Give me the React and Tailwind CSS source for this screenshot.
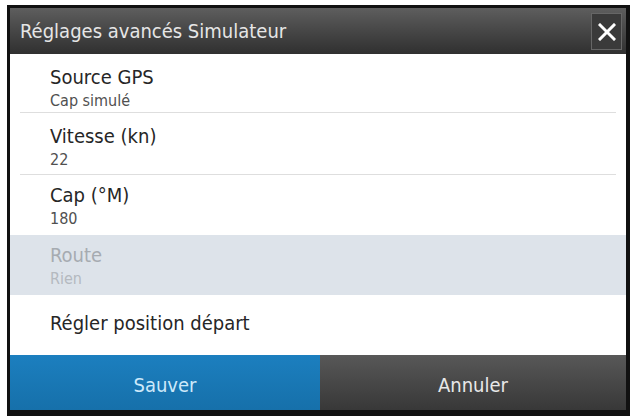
import React from 'react';

const font = { fontFamily: '"DejaVu Sans Condensed", "Liberation Sans", Arial, sans-serif' };

function Row({ title, value, disabled, className }) {
    return (
        <div className={className}>
            <div className={"text-[20px] leading-[22px] " + (disabled ? "text-[#a6abb1]" : "text-[#262626]")}>{title}</div>
            {value && (
                <div className={"mt-[3px] text-[16px] leading-[19px] " + (disabled ? "text-[#b4b9bf]" : "text-[#505050]")}>{value}</div>
            )}
        </div>
    );
}

export default function App() {
    return (
        <div className="w-[635px] h-[417px] bg-white overflow-hidden" style={font}>
            <div className="ml-[7px] mt-[5px] w-[623px] h-[411px] bg-[#111111] pt-[3px] pl-[3px] pr-[4px] pb-[6px] flex flex-col">
                {/* header */}
                <div className="h-[46px] flex items-center justify-between bg-gradient-to-b from-[#5e5e5e] to-[#303030] pl-[10px] pr-[4px]">
                    <span className="text-[20px] text-[#e6e6e6] leading-none">Réglages avancés Simulateur</span>
                    <div className="w-[31px] h-[37px] bg-[#3a3a3a] border border-[#666666] flex items-center justify-center mt-[1px]">
                        <svg width="18" height="18" viewBox="0 0 18 18">
                            <path d="M2 2 L16 16 M16 2 L2 16" stroke="#ffffff" strokeWidth="3" strokeLinecap="square" />
                        </svg>
                    </div>
                </div>

                {/* list */}
                <div className="bg-white flex flex-col">
                    <div className="mx-[10px] border-b border-[#dedede]">
                        <Row className="h-[58px] pt-[12px] pl-[30px]" title="Source GPS" value="Cap simulé" />
                    </div>
                    <div className="mx-[10px] border-b border-[#dedede]">
                        <Row className="h-[61px] pt-[12px] pl-[30px]" title="Vitesse (kn)" value="22" />
                    </div>
                    <Row className="h-[60px] pt-[9px] pl-[40px]" title="Cap (°M)" value="180" />
                    <Row className="h-[60px] pt-[9px] pl-[40px] bg-[#dde3ea]" title="Route" value="Rien" disabled />
                    <Row className="h-[60px] pt-[17px] pl-[40px]" title="Régler position départ" />
                </div>

                {/* buttons */}
                <div className="h-[55px] flex">
                    <div className="w-[310px] flex items-center justify-center bg-gradient-to-b from-[#1c7fbf] to-[#1670aa] pt-[4px]">
                        <span className="text-[20px] text-[#cde9fa]">Sauver</span>
                    </div>
                    <div className="flex-1 flex items-center justify-center bg-gradient-to-b from-[#585858] to-[#383838] pt-[4px]">
                        <span className="text-[20px] text-[#e8e8e8]">Annuler</span>
                    </div>
                </div>
            </div>
        </div>
    );
}
